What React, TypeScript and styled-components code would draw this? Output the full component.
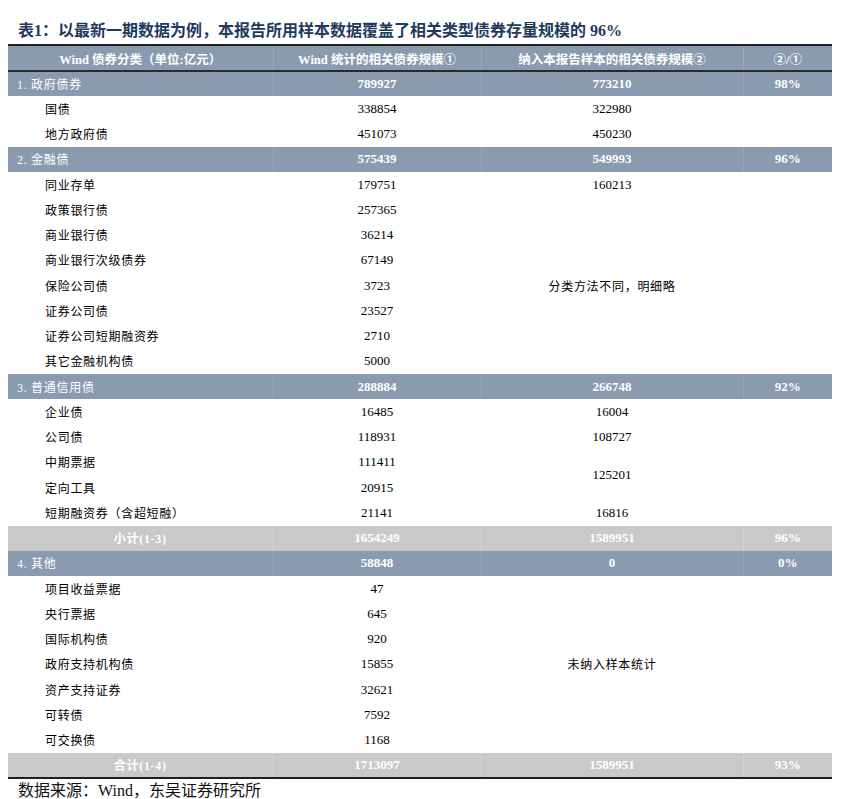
import React from "react";
import styled, { createGlobalStyle, css } from "styled-components";

const Global = createGlobalStyle`
  html, body { margin: 0; padding: 0; background: #fff; }
  body { font-family: "Liberation Serif", "Noto Sans CJK SC", serif; }
`;

const Page = styled.div`
  width: 854px;
  height: 799px;
  padding: 21px 0 0 8px;
  box-sizing: border-box;
  overflow: hidden;
`;

const Title = styled.h1`
  margin: 0 0 3px 0;
  padding-left: 10px;
  height: 20px;
  line-height: 20px;
  font-size: 16px;
  font-weight: bold;
  color: #1f3a5f;
  font-family: "Liberation Serif", "Noto Sans CJK SC", serif;
  white-space: nowrap;
`;

const Table = styled.table`
  width: 824px;
  table-layout: fixed;
  border-collapse: collapse;
  border-top: 2px solid #1e1e1e;
  border-bottom: 2px solid #1e1e1e;
`;

const HeadRow = styled.tr`
  height: 26px;
  background: #8a9bb0;
  border-bottom: 2px solid #2a2a2a;
`;

const HeadCell = styled.th`
  padding: 0;
  color: #fff;
  font-size: 12.5px;
  font-weight: bold;
  text-align: center;
  white-space: nowrap;
  border-left: 1px solid #9aa9bb;
  &:first-child { border-left: none; }
`;

type Kind = "group" | "sub" | "total";

const Row = styled.tr<{ $kind: Kind }>`
  height: 25.25px;
  ${(p) =>
    p.$kind === "group" &&
    css`
      background: #8a9bb0;
      color: #fff;
    `}
  ${(p) =>
    p.$kind === "total" &&
    css`
      background: #c9c9c9;
      color: #fff;
    `}
  ${(p) =>
    p.$kind === "sub" &&
    css`
      background: #fff;
      color: #000;
    `}
`;

const LabelCell = styled.td<{ $kind: Kind }>`
  padding: 0;
  font-size: 12px;
  letter-spacing: 0.7px;
  white-space: nowrap;
  text-align: ${(p) => (p.$kind === "total" ? "center" : "left")};
  padding-left: ${(p) => (p.$kind === "sub" ? "37px" : p.$kind === "group" ? "9px" : "0")};
  font-weight: ${(p) => (p.$kind === "total" ? "bold" : "normal")};
`;

const NumCell = styled.td<{ $kind: Kind }>`
  padding: 0;
  font-size: 13px;
  text-align: center;
  white-space: nowrap;
  font-weight: ${(p) => (p.$kind === "sub" ? "normal" : "bold")};
  ${(p) =>
    p.$kind === "group" &&
    css`
      border-left: 1px solid #98a8ba;
    `}
  ${(p) =>
    p.$kind === "total" &&
    css`
      border-left: 1px solid #d6d6d6;
    `}
`;

const NoteCell = styled.td`
  padding: 0;
  font-size: 12px;
  letter-spacing: 0.7px;
  text-align: center;
  vertical-align: middle;
  color: #000;
`;

const Source = styled.div`
  padding-left: 10px;
  margin-top: 2px;
  height: 20px;
  line-height: 20px;
  font-size: 16px;
  color: #111;
  white-space: nowrap;
`;

type R = {
  kind: Kind;
  label: string;
  a: string;
  b?: string;
  note?: string;
  span?: number;
  skip?: boolean;
  c?: string;
};

const rows: R[] = [
  { kind: "group", label: "1. 政府债券", a: "789927", b: "773210", c: "98%" },
  { kind: "sub", label: "国债", a: "338854", b: "322980" },
  { kind: "sub", label: "地方政府债", a: "451073", b: "450230" },
  { kind: "group", label: "2. 金融债", a: "575439", b: "549993", c: "96%" },
  { kind: "sub", label: "同业存单", a: "179751", b: "160213" },
  { kind: "sub", label: "政策银行债", a: "257365", note: "分类方法不同，明细略", span: 7 },
  { kind: "sub", label: "商业银行债", a: "36214", skip: true },
  { kind: "sub", label: "商业银行次级债券", a: "67149", skip: true },
  { kind: "sub", label: "保险公司债", a: "3723", skip: true },
  { kind: "sub", label: "证券公司债", a: "23527", skip: true },
  { kind: "sub", label: "证券公司短期融资券", a: "2710", skip: true },
  { kind: "sub", label: "其它金融机构债", a: "5000", skip: true },
  { kind: "group", label: "3. 普通信用债", a: "288884", b: "266748", c: "92%" },
  { kind: "sub", label: "企业债", a: "16485", b: "16004" },
  { kind: "sub", label: "公司债", a: "118931", b: "108727" },
  { kind: "sub", label: "中期票据", a: "111411", b: "125201", span: 2 },
  { kind: "sub", label: "定向工具", a: "20915", skip: true },
  { kind: "sub", label: "短期融资券（含超短融）", a: "21141", b: "16816" },
  { kind: "total", label: "小计(1-3)", a: "1654249", b: "1589951", c: "96%" },
  { kind: "group", label: "4. 其他", a: "58848", b: "0", c: "0%" },
  { kind: "sub", label: "项目收益票据", a: "47", note: "未纳入样本统计", span: 7 },
  { kind: "sub", label: "央行票据", a: "645", skip: true },
  { kind: "sub", label: "国际机构债", a: "920", skip: true },
  { kind: "sub", label: "政府支持机构债", a: "15855", skip: true },
  { kind: "sub", label: "资产支持证券", a: "32621", skip: true },
  { kind: "sub", label: "可转债", a: "7592", skip: true },
  { kind: "sub", label: "可交换债", a: "1168", skip: true },
  { kind: "total", label: "合计(1-4)", a: "1713097", b: "1589951", c: "93%" },
];

export default function App() {
  return (
    <>
      <Global />
      <Page>
        <Title>表1：以最新一期数据为例，本报告所用样本数据覆盖了相关类型债券存量规模的 96%</Title>
        <Table>
          <colgroup>
            <col style={{ width: 265 }} />
            <col style={{ width: 208 }} />
            <col style={{ width: 262 }} />
            <col style={{ width: 89 }} />
          </colgroup>
          <thead>
            <HeadRow>
              <HeadCell>Wind 债券分类（单位:亿元）</HeadCell>
              <HeadCell>Wind 统计的相关债券规模①</HeadCell>
              <HeadCell>纳入本报告样本的相关债券规模②</HeadCell>
              <HeadCell>②/①</HeadCell>
            </HeadRow>
          </thead>
          <tbody>
            {rows.map((r, i) => (
              <Row key={i} $kind={r.kind}>
                <LabelCell $kind={r.kind}>{r.label}</LabelCell>
                <NumCell $kind={r.kind}>{r.a}</NumCell>
                {r.skip ? null : r.note ? (
                  <NoteCell rowSpan={r.span}>{r.note}</NoteCell>
                ) : (
                  <NumCell $kind={r.kind} rowSpan={r.span}>
                    {r.b}
                  </NumCell>
                )}
                <NumCell $kind={r.kind}>{r.c ?? ""}</NumCell>
              </Row>
            ))}
          </tbody>
        </Table>
        <Source>数据来源：Wind，东吴证券研究所</Source>
      </Page>
    </>
  );
}
